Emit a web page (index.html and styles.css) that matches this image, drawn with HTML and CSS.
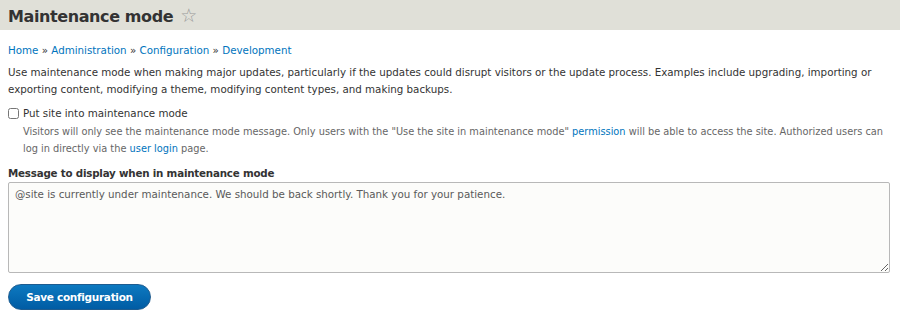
FILE: index.html
```html
<!DOCTYPE html>
<html lang="en">
<head>
    <meta charset="UTF-8">
    <title>Maintenance mode</title>
    <link rel="stylesheet" href="styles.css">
</head>
<body>
    <div class="page-header">
        <h1 class="page-title">Maintenance mode <span class="shortcut">&#9734;</span></h1>
    </div>

    <div class="content">
        <nav class="breadcrumb">
            <a href="#">Home</a> » <a href="#">Administration</a> » <a href="#">Configuration</a> » <a href="#">Development</a>
        </nav>

        <p class="help">
            Use maintenance mode when making major updates, particularly if the updates could disrupt visitors or the update process. Examples include upgrading, importing or exporting content, modifying a theme, modifying content types, and making backups.
        </p>

        <div class="form-item form-checkbox">
            <label class="option"><input type="checkbox" class="checkbox"> Put site into maintenance mode</label>
            <div class="description">
                Visitors will only see the maintenance mode message. Only users with the "Use the site in maintenance mode" <a href="#">permission</a> will be able to access the site. Authorized users can log in directly via the <a href="#">user login</a> page.
            </div>
        </div>

        <div class="form-item">
            <label class="field-label" for="message">Message to display when in maintenance mode</label>
            <textarea id="message" class="form-textarea">@site is currently under maintenance. We should be back shortly. Thank you for your patience.</textarea>
        </div>

        <div class="form-actions">
            <button class="button button-primary">Save configuration</button>
        </div>
    </div>
</body>
</html>
```

FILE: styles.css
```css
* {
    margin: 0;
    padding: 0;
    box-sizing: border-box;
}

body {
    font-family: 'DejaVu Sans', Verdana, sans-serif;
    font-size: 10.3px;
    line-height: 17px;
    color: #333;
    background: #fff;
}

a {
    color: #0074bd;
    text-decoration: none;
}

.page-header {
    background: #e0e0d8;
    height: 30px;
    padding: 3px 8px 0;
}

.page-title {
    font-size: 16px;
    letter-spacing: -0.4px;
    font-weight: bold;
    color: #333;
    line-height: 24px;
}

.shortcut {
    font-weight: normal;
    color: #999;
    font-size: 19px;
    letter-spacing: 0;
    margin-left: 2px;
}

.content {
    padding: 12px 8px 0;
}

.breadcrumb {
    margin-bottom: 5px;
}

.help {
    margin-bottom: 7px;
}

.form-checkbox .option {
    display: flex;
    align-items: center;
    gap: 4px;
}

.checkbox {
    width: 11px;
    height: 11px;
}

.form-checkbox .description {
    color: #666;
    font-size: 9.8px;
    padding-left: 15px;
    margin-top: 1px;
}

.form-item {
    margin-bottom: 8px;
}

.field-label {
    display: block;
    font-weight: bold;
    letter-spacing: -0.2px;
}

.form-textarea {
    display: block;
    width: 882px;
    height: 91px;
    border: 1px solid #b8b8b8;
    border-radius: 2px;
    background: #fcfcfa;
    color: #595959;
    font-family: inherit;
    font-size: 10.3px;
    padding: 5px 6px;
    resize: vertical;
}

.form-actions {
    padding-top: 3px;
}

.button {
    background: linear-gradient(#0d79c0, #005ca4);
    color: #fff;
    border: 1px solid #1e5c90;
    border-radius: 14px;
    font-family: inherit;
    font-weight: bold;
    font-size: 10.5px;
    letter-spacing: -0.3px;
    white-space: nowrap;
    height: 26px;
    width: 143px;
}
```
